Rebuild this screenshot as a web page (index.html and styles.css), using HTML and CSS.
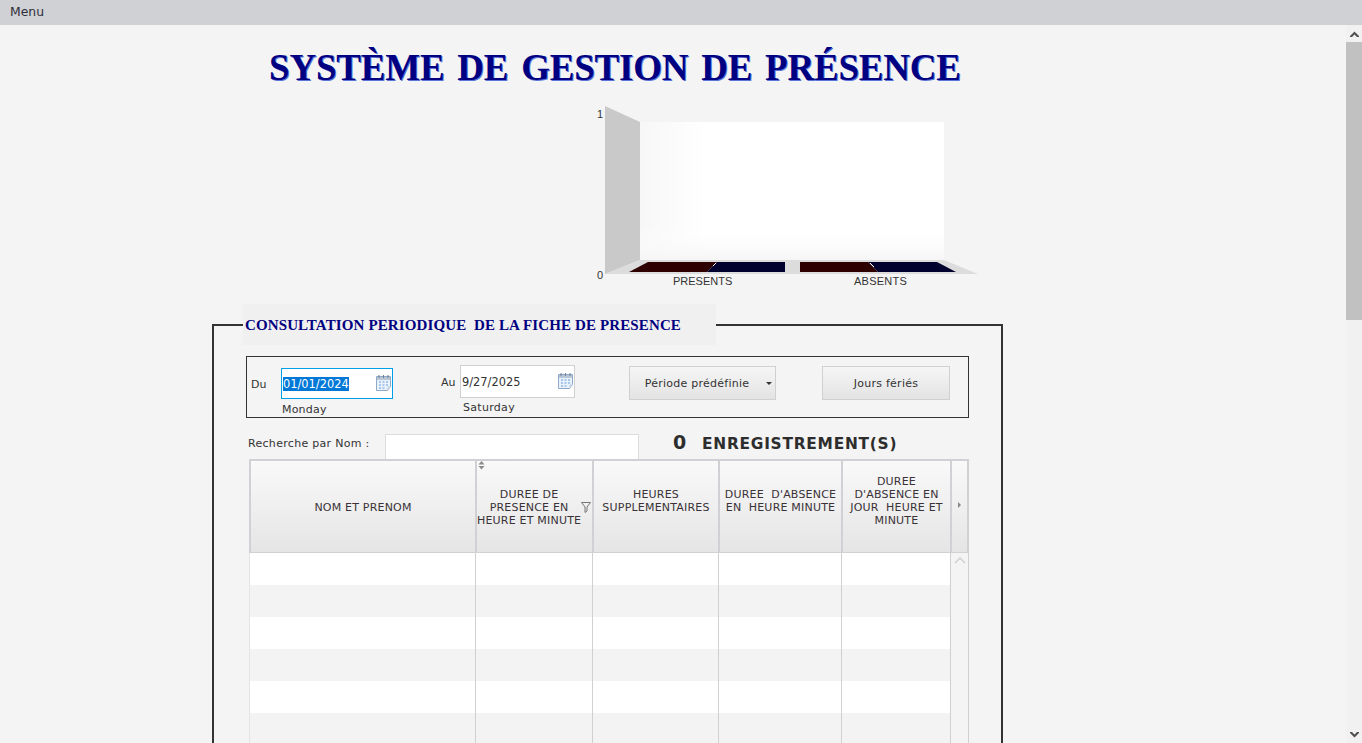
FILE: index.html
```html
<!DOCTYPE html>
<html lang="fr">
<head>
<meta charset="utf-8">
<title>Système de gestion de présence</title>
<link rel="stylesheet" href="styles.css">
</head>
<body>
<div class="app">
  <header class="menubar"><span class="menu-item">Menu</span></header>
  <div class="viewport">
    <main class="content">
      <h1 class="title">SYSTÈME DE GESTION DE PRÉSENCE</h1>
      <svg class="chart" width="400" height="195" viewBox="590 100 400 195" role="img" aria-label="Présents et absents">
        <defs>
          <linearGradient id="wallLeft" x1="0" x2="1" y1="0" y2="0">
            <stop offset="0" stop-color="#f7f7f7"/><stop offset="0.22" stop-color="#fff"/>
          </linearGradient>
          <linearGradient id="wallBottom" x1="0" x2="0" y1="0" y2="1">
            <stop offset="0.75" stop-color="#fff" stop-opacity="0"/><stop offset="1" stop-color="#f6f6f6"/>
          </linearGradient>
        </defs>
        <polygon points="605,106 640,122 640,260 605,274" fill="#c9c9c9"/>
        <rect x="640" y="122" width="304" height="138" fill="url(#wallLeft)"/>
        <rect x="640" y="122" width="304" height="138" fill="url(#wallBottom)"/>
        <polygon points="640,260 944,260 978,274 605,274" fill="#dcdcdc"/>
        <polygon points="629,272 648,262 717,262 707,272" fill="#2e0000"/>
        <polygon points="707,272 717,262 785,262 785,272" fill="#00002e"/>
        <polygon points="800,262 868,262 878,272 800,272" fill="#2e0000"/>
        <polygon points="868,262 937,262 956,272 878,272" fill="#00002e"/>
        <line x1="713" y1="266" x2="716" y2="263" stroke="#fff"/>
        <line x1="870" y1="263" x2="874" y2="267" stroke="#fff"/>
        <text class="chart-text" x="597" y="118">1</text>
        <text class="chart-text" x="597" y="279">0</text>
        <text class="chart-text" x="673" y="285">PRESENTS</text>
        <text class="chart-text chart-wide" x="854" y="285">ABSENTS</text>
      </svg>
      <fieldset class="panel">
        <legend class="panel-legend">CONSULTATION PERIODIQUE&nbsp; DE LA FICHE DE PRESENCE</legend>
        <div class="period">
          <div class="date-group date-from">
            <span class="date-label label-du">Du</span>
            <div class="date-col">
              <div class="date-input focused">
                <span class="date-value selected">01/01/2024</span>
                <svg class="cal" width="15" height="17" viewBox="0 0 15 17"><use href="#calendar"/></svg>
              </div>
              <span class="date-day">Monday</span>
            </div>
          </div>
          <div class="date-group date-to">
            <span class="date-label label-au">Au</span>
            <div class="date-col">
              <div class="date-input">
                <span class="date-value">9/27/2025</span>
                <svg class="cal" width="15" height="17" viewBox="0 0 15 17"><use href="#calendar"/></svg>
              </div>
              <span class="date-day">Saturday</span>
            </div>
          </div>
          <button class="btn btn-period" type="button">Période prédéfinie<span class="caret"></span></button>
          <button class="btn btn-days" type="button">Jours fériés</button>
        </div>
        <div class="search">
          <label class="search-label" for="nom">Recherche par Nom :</label>
          <input class="search-input" id="nom" type="text">
          <span class="count"><b class="count-num">0</b><span class="count-text">ENREGISTREMENT(S)</span></span>
        </div>
        <div class="table">
          <div class="thead">
            <div class="th">NOM ET PRENOM</div>
            <div class="th th-sort">
              <svg class="sort" width="7" height="9" viewBox="0 0 7 9"><path d="M3.5 0 L6.5 3.5 H0.5Z M0.5 5 H6.5 L3.5 8.5Z" fill="#8a8a8a"/></svg>
              <span class="th-text">DUREE DE<br>PRESENCE EN<br>HEURE ET MINUTE</span>
              <svg class="filter" width="10" height="11" viewBox="0 0 10 11"><path d="M0.5 0.5 H9.5 L6 5 V9 L4 10.5 V5Z" fill="none" stroke="#777"/></svg>
            </div>
            <div class="th th-up">HEURES<br>SUPPLEMENTAIRES</div>
            <div class="th th-up">DUREE&nbsp; D'ABSENCE<br>EN&nbsp; HEURE MINUTE</div>
            <div class="th th-up">DUREE<br>D'ABSENCE EN<br>JOUR&nbsp; HEURE ET<br>MINUTE</div>
            <div class="th th-more"><span class="more-arrow"></span></div>
          </div>
          <div class="tbody">
            <div class="rows">
              <div class="row"><i></i><i></i><i></i><i></i><i></i></div>
              <div class="row"><i></i><i></i><i></i><i></i><i></i></div>
              <div class="row"><i></i><i></i><i></i><i></i><i></i></div>
              <div class="row"><i></i><i></i><i></i><i></i><i></i></div>
              <div class="row"><i></i><i></i><i></i><i></i><i></i></div>
              <div class="row"><i></i><i></i><i></i><i></i><i></i></div>
            </div>
            <div class="vscroll">
              <svg class="chev" width="12" height="7" viewBox="0 0 12 7"><path d="M1 6 L6 1 L11 6" fill="none" stroke="#d0d0d0" stroke-width="1.5"/></svg>
            </div>
          </div>
        </div>
      </fieldset>
    </main>
    <div class="scrollbar" aria-hidden="true">
      <span class="sb-btn"><svg width="9" height="6" viewBox="0 0 9 6"><path d="M0 5 L4.5 0.5 L9 5 L9 6 L7 6 L4.5 3.5 L2 6 L0 6Z" fill="#505050"/></svg></span>
      <span class="sb-thumb"></span>
      <span class="sb-track"></span>
      <span class="sb-btn"><svg width="9" height="6" viewBox="0 0 9 6"><path d="M0 1 L4.5 5.5 L9 1 L9 0 L7 0 L4.5 2.5 L2 0 L0 0Z" fill="#505050"/></svg></span>
    </div>
  </div>
</div>
<svg class="defs" width="0" height="0">
  <symbol id="calendar" viewBox="0 0 15 17">
    <path d="M0.5 2.5 H14.5 V12.5 L11.5 16.5 H0.5Z" fill="#e9f1fb" stroke="#8fa9c8"/>
    <rect x="1" y="3" width="13" height="3" fill="#b9c6d6"/>
    <path d="M3 1 V4 M7.5 1 V4 M12 1 V4" stroke="#6c7f96"/>
    <path d="M3 7 H5 V9 H3Z M6.5 7 H8.5 V9 H6.5Z M10 7 H12 V9 H10Z M3 10 H5 V12 H3Z M6.5 10 H8.5 V12 H6.5Z M10 10 H12 V12 H10Z M3 13 H5 V15 H3Z M6.5 13 H8.5 V15 H6.5Z" fill="#a9c7ec"/>
    <path d="M14.5 12.5 L11.5 12.5 L11.5 16.5Z" fill="#c4d2e3"/>
  </symbol>
</svg>
</body>
</html>
```
FILE: styles.css
```css
* { box-sizing: border-box; }
html, body { margin: 0; height: 100%; overflow: hidden; }
body { font-family: "DejaVu Sans", Verdana, sans-serif; font-size: 11px; color: #333; background: #f4f4f4; }
.defs { display: block; height: 0; }

.app { height: 100vh; display: flex; flex-direction: column; }
.menubar { height: 25px; flex: none; background: #d0d1d5; padding: 5px 0 0 10px; font-size: 12.4px; line-height: 14px; color: #2f2f3a; }
.viewport { flex: 1; min-height: 0; display: flex; }
.content { flex: 1; min-width: 0; overflow: hidden; }

.title {
  margin: 0; padding: 20px 0 0 269px; height: 75px;
  font-family: "Liberation Serif", serif; font-weight: 700; font-size: 37px; line-height: 45px;
  letter-spacing: -0.2px; word-spacing: 3.8px; color: #000080;
  text-shadow: 1px 1px 0 #5a74d8; white-space: nowrap;
}
.chart { display: block; margin-left: 590px; }
.chart-text { font-family: "Liberation Sans", Arial, sans-serif; font-size: 11px; fill: #333; }
.chart-wide { letter-spacing: 0.25px; }

.panel { margin: 9px 0 0 212px; width: 791px; padding: 0 33px 0 32px; border: 2px solid #333; min-width: 0; }
.panel-legend {
  margin: 0 0 -2px -3px; padding: 0 0 0 2px; width: 473px; height: 41px;
  font-family: "Liberation Serif", serif; font-weight: 700; font-size: 15px; line-height: 42px; letter-spacing: 0.12px;
  color: #000080; background: #f0f0f0; white-space: nowrap;
}

.period { margin-top: 13px; width: 723px; height: 62px; border: 1px solid #333; display: flex; align-items: flex-start; }
.date-group { display: flex; }
.date-label { font-size: 11px; line-height: 14px; }
.label-du { width: 30px; margin: 21px 0 0 4px; }
.label-au { width: 19px; margin: 19px 0 0 0; }
.date-to { margin-left: 48px; }
.date-col { display: flex; flex-direction: column; }
.date-input { display: flex; align-items: center; justify-content: space-between; background: #fff; border: 1px solid #d0d0d0; padding: 0 1px; font-size: 11.4px; color: #333; }
.date-from .date-input { width: 112px; height: 31px; margin-top: 11px; }
.date-to .date-input { width: 115px; height: 33px; margin-top: 8px; }
.date-input.focused { border-color: #00a0e9; }
.selected { background: #0078d7; color: #fff; }
.cal { display: block; flex: none; margin-bottom: 2px; }
.date-day { font-size: 11px; line-height: 14px; margin: 4px 0 0 1px; letter-spacing: 0.2px; }
.date-to .date-day { margin: 3px 0 0 3px; letter-spacing: 0.3px; }

.btn {
  display: block; height: 34px; margin-top: 9px; padding: 0; border: 1px solid #d0d0d0;
  background: linear-gradient(#f6f6f6, #e3e3e3); font: 11px "DejaVu Sans", Verdana, sans-serif; letter-spacing: 0.25px; color: #333; position: relative;
}
.btn-period { width: 147px; margin-left: 54px; padding-right: 11px; }
.btn-days { width: 128px; margin-left: 46px; }
.caret { position: absolute; right: 3px; top: 15px; border: 3px solid transparent; border-top-color: #333; border-bottom: 0; }

.search { display: flex; align-items: flex-start; height: 41px; margin-top: 16px; width: 723px; }
.search-label { font-size: 11px; line-height: 14px; margin: 3px 0 0 2px; width: 137px; letter-spacing: 0.3px; flex: none; }
.search-input { width: 254px; height: 25px; margin: 0; padding: 0; background: #fff; border: 1px solid #dcdcdc; border-bottom: 0; flex: none; }
.count { display: flex; align-items: baseline; margin: -1px 0 0 34px; font-weight: 700; color: #2d2d2d; line-height: 18px; }
.count-num { font-size: 19px; width: 29px; }
.count-text { font-size: 15.4px; letter-spacing: 0.75px; }

.table { margin: -16px 0 0 3px; width: 720px; font-size: 11px; }
.thead {
  display: grid; grid-template-columns: 226px 117px 126px 123px 109px 15px; height: 94px;
  border: solid #d0d1d5; border-width: 2px 2px 1px 2px;
}
.th {
  display: flex; align-items: center; justify-content: center; text-align: center; line-height: 13px; letter-spacing: 0.2px;
  border-right: 2px solid #d0d1d5; background: linear-gradient(#f9f9f9, #e5e5e5); color: #3a3238;
  position: relative; padding-top: 1px;
}
.th-up { padding: 0 0 11px; }
.th-more { border-right: 0; padding: 0 0 3px; }
.th-text { display: block; white-space: nowrap; }
.th-sort { padding-top: 1px; justify-content: flex-start; }
.sort { position: absolute; left: 1px; top: 0; }
.filter { position: absolute; right: 1px; top: 41px; }
.more-arrow { border: 3px solid transparent; border-left-color: #888; border-right: 0; }

.tbody { display: flex; height: 300px; }
.rows { width: 702px; border-left: 1px solid #e4e4e4; }
.row { display: grid; grid-template-columns: 226px 117px 126px 123px 109px; height: 32px; background: #fff; }
.row:nth-child(even) { background: #f3f3f3; }
.row i { display: block; border-right: 1px solid #d0d0d0; }
.vscroll { width: 18px; border-right: 1px solid #d0d0d0; padding: 4px 0 0 3px; }
.chev { display: block; }

.scrollbar { width: 16px; flex: none; display: flex; flex-direction: column; background: #f1f1f1; }
.sb-btn { height: 17px; display: flex; align-items: center; justify-content: center; flex: none; }
.sb-thumb { height: 278px; background: #c1c1c1; flex: none; }
.sb-track { flex: 1; }
```
